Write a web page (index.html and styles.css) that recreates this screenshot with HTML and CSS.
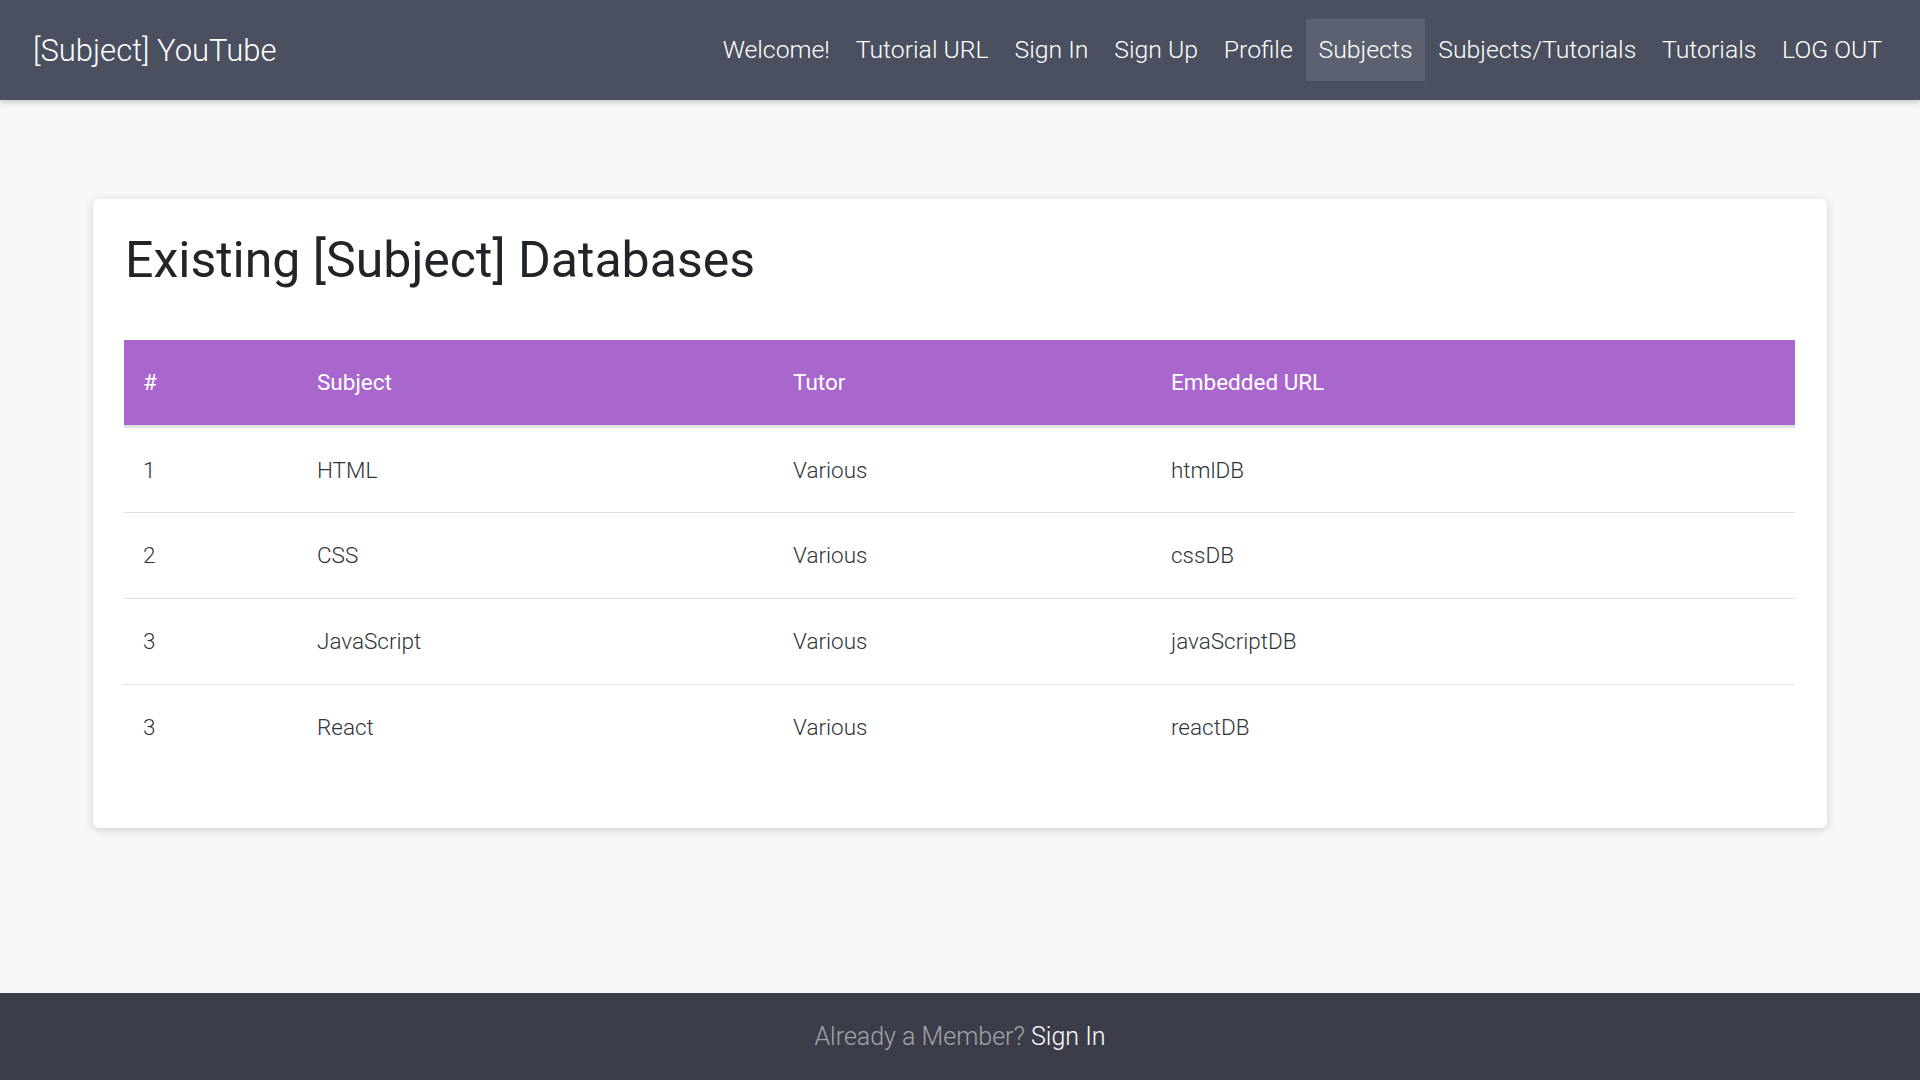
FILE: index.html
```html
<!DOCTYPE html>
<html lang="en">
<head>
<meta charset="utf-8">
<title>[Subject] YouTube</title>
<link rel="stylesheet" href="styles.css">
</head>
<body>
<div class="page">
  <header class="navbar">
    <a class="brand" href="#">[Subject] YouTube</a>
    <nav class="nav">
      <a class="nav-link" href="#">Welcome!</a>
      <a class="nav-link" href="#">Tutorial URL</a>
      <a class="nav-link" href="#">Sign In</a>
      <a class="nav-link" href="#">Sign Up</a>
      <a class="nav-link" href="#">Profile</a>
      <a class="nav-link active" href="#">Subjects</a>
      <a class="nav-link" href="#">Subjects/Tutorials</a>
      <a class="nav-link" href="#">Tutorials</a>
      <a class="nav-link" href="#">LOG OUT</a>
    </nav>
  </header>
  <main class="main">
    <section class="card">
      <h1 class="title">Existing [Subject] Databases</h1>
      <table class="table">
        <colgroup>
          <col class="col-num">
          <col class="col-subject">
          <col class="col-tutor">
          <col class="col-url">
        </colgroup>
        <thead>
          <tr><th>#</th><th>Subject</th><th>Tutor</th><th>Embedded URL</th></tr>
        </thead>
        <tbody>
          <tr><td>1</td><td>HTML</td><td>Various</td><td>htmlDB</td></tr>
          <tr><td>2</td><td>CSS</td><td>Various</td><td>cssDB</td></tr>
          <tr><td>3</td><td>JavaScript</td><td>Various</td><td>javaScriptDB</td></tr>
          <tr class="last"><td>3</td><td>React</td><td>Various</td><td>reactDB</td></tr>
        </tbody>
      </table>
    </section>
  </main>
  <footer class="footer">
    <span class="muted">Already a Member?</span>&nbsp;<a class="footer-link" href="#">Sign In</a>
  </footer>
</div>
</body>
</html>
```
FILE: styles.css
```css
* { box-sizing: border-box; }
html, body { margin: 0; padding: 0; }
body {
  font-family: Roboto, "Liberation Sans", sans-serif;
  font-weight: 300;
  background: #f7f7f7;
  color: #343a40;
}
a { text-decoration: none; }
.page {
  min-height: 1080px;
  display: flex;
  flex-direction: column;
}
.navbar {
  height: 100px;
  background: #4a5060;
  display: flex;
  align-items: center;
  justify-content: space-between;
  padding: 0 25px 0 33px;
  box-shadow: 0 2px 6px rgba(0,0,0,0.22);
  position: relative;
  z-index: 1;
}
.brand {
  color: #ffffff;
  font-size: 31px;
  font-weight: 300;
  line-height: 1;
}
.nav { display: flex; align-items: center; }
.nav-link {
  color: #ffffff;
  font-size: 24.8px;
  font-weight: 300;
  line-height: 62px;
  height: 62px;
  padding: 0 12.9px;
}
.nav-link.active { background: #5b6171; }
.main {
  flex: 1;
  padding: 99px 93px 0;
}
.card {
  background: #ffffff;
  border-radius: 6px;
  box-shadow: 0 2px 8px rgba(0,0,0,0.16);
  padding: 31px 32px 34px 31px;
}
.title {
  margin: 0 0 50px;
  font-size: 50px;
  font-weight: 400;
  color: #212529;
  line-height: 60px;
  padding-left: 1px;
}
.table {
  width: 100%;
  border-collapse: collapse;
  font-size: 22.5px;
  margin-bottom: 24px;
}
.col-num { width: 174px; }
.col-subject { width: 476px; }
.col-tutor { width: 378px; }
.table th {
  background: #a966cc;
  color: #ffffff;
  font-weight: 400;
  text-align: left;
  height: 86px;
  padding: 0 19px;
  border-bottom: 3px solid #dee2e6;
}
.table td {
  height: 86px;
  padding: 0 19px;
  border-bottom: 1px solid #e0e0e0;
  color: #2f3438;
}
.table tr.last td { border-bottom: none; }
.footer {
  height: 87px;
  background: #3b3e4a;
  display: flex;
  align-items: center;
  justify-content: center;
  font-size: 25px;
  font-weight: 300;
}
.muted { color: #a2a4a8; }
.footer-link { color: #ffffff; }
```
